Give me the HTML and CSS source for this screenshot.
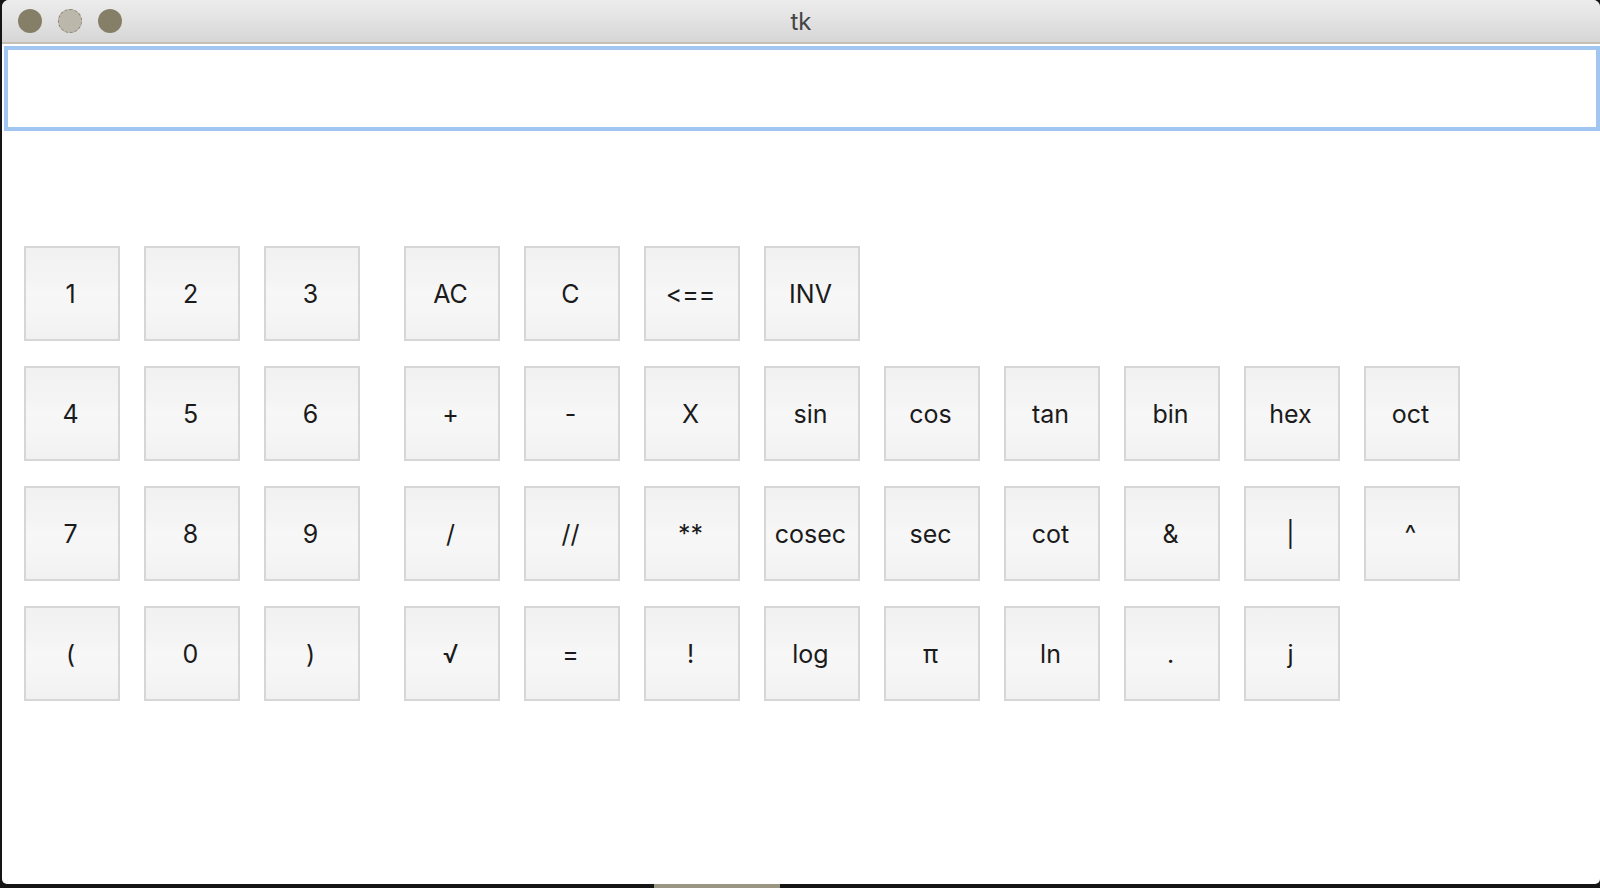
FILE: index.html
```html
<!DOCTYPE html>
<html>
<head>
<meta charset="utf-8">
<title>tk</title>
<link rel="stylesheet" href="styles.css">
</head>
<body>
<div class="screen">
  <div class="window">
    <div class="titlebar">
      <div class="lights">
        <span class="light"></span>
        <span class="light light-mid"></span>
        <span class="light"></span>
      </div>
      <div class="title">tk</div>
    </div>
    <div class="entry-wrap"><input class="entry" type="text" value=""></div>
    <div class="keypad">
      <div class="row">
        <div class="group">
          <div class="key">1</div><div class="key">2</div><div class="key">3</div>
        </div>
        <div class="group">
          <div class="key">AC</div><div class="key">C</div><div class="key">&lt;==</div><div class="key">INV</div>
        </div>
      </div>
      <div class="row">
        <div class="group">
          <div class="key">4</div><div class="key">5</div><div class="key">6</div>
        </div>
        <div class="group">
          <div class="key">+</div><div class="key">-</div><div class="key">X</div><div class="key">sin</div><div class="key">cos</div><div class="key">tan</div><div class="key">bin</div><div class="key">hex</div><div class="key">oct</div>
        </div>
      </div>
      <div class="row">
        <div class="group">
          <div class="key">7</div><div class="key">8</div><div class="key">9</div>
        </div>
        <div class="group">
          <div class="key">/</div><div class="key">//</div><div class="key">**</div><div class="key">cosec</div><div class="key">sec</div><div class="key">cot</div><div class="key">&amp;</div><div class="key">|</div><div class="key">^</div>
        </div>
      </div>
      <div class="row">
        <div class="group">
          <div class="key">(</div><div class="key">0</div><div class="key">)</div>
        </div>
        <div class="group">
          <div class="key">√</div><div class="key">=</div><div class="key">!</div><div class="key">log</div><div class="key">π</div><div class="key">ln</div><div class="key">.</div><div class="key">j</div>
        </div>
      </div>
    </div>
  </div>
  <div class="dock">
    <div class="dock-item"></div>
  </div>
</div>
</body>
</html>
```

FILE: styles.css
```css
html, body {
  margin: 0;
  padding: 0;
  background: #151515;
  width: 1600px;
  height: 888px;
  overflow: hidden;
}

.screen {
  display: flex;
  flex-direction: column;
  width: 1600px;
  height: 888px;
}

.window {
  margin-left: 2px;
  height: 884px;
  background: #ffffff;
  border-radius: 7px 7px 5px 5px;
  overflow: hidden;
  display: flex;
  flex-direction: column;
  font-family: Inter, "Liberation Sans", Arial, sans-serif;
  font-feature-settings: "calt" 0, "liga" 0;
  font-variant-ligatures: none;
}

.titlebar {
  height: 42px;
  flex: none;
  background: linear-gradient(#ececec, #e4e4e4 40%, #d6d6d6);
  border-bottom: 2px solid #c4c0b6;
  display: flex;
  align-items: center;
  position: relative;
}

.lights {
  display: flex;
  gap: 16px;
  padding-left: 16px;
}

.light {
  width: 24px;
  height: 24px;
  border-radius: 50%;
  background: #857f68;
  box-sizing: border-box;
}

.light-mid {
  background: #bcb7ab;
  border: 1px dashed #8c8572;
}

.title {
  position: absolute;
  left: 0;
  right: 0;
  top: 0;
  height: 42px;
  line-height: 44px;
  text-align: center;
  font-size: 24px;
  color: #444444;
  pointer-events: none;
}

.entry-wrap {
  padding: 2px 0 0 2px;
  flex: none;
}

.entry {
  display: block;
  width: 1596px;
  height: 85px;
  box-sizing: border-box;
  margin: 0;
  border: 4px solid #a1c6f1;
  background: #ffffff;
  outline: none;
  font-family: Inter, "Liberation Sans", Arial, sans-serif;
  font-size: 24px;
}

.keypad {
  padding: 115px 0 0 22px;
  display: flex;
  flex-direction: column;
  gap: 25px;
}

.row {
  display: flex;
  gap: 44px;
}

.group {
  display: flex;
  gap: 24px;
}

.key {
  width: 96px;
  height: 95px;
  box-sizing: border-box;
  border: 2px solid #d6d6d6;
  background: linear-gradient(#f1f1f1, #f4f4f4 35%, #f7f7f7 50%, #f5f5f5 75%, #f1f1f1);
  display: flex;
  align-items: center;
  justify-content: center;
  font-size: 25px;
  color: #1b1b1b;
  padding: 1px 3px 0 0;
  font-feature-settings: "calt" 0, "liga" 0;
}

.dock {
  height: 4px;
  flex: none;
  display: flex;
  padding-left: 654px;
}

.dock-item {
  width: 126px;
  height: 4px;
  background: #9b9583;
}
```
